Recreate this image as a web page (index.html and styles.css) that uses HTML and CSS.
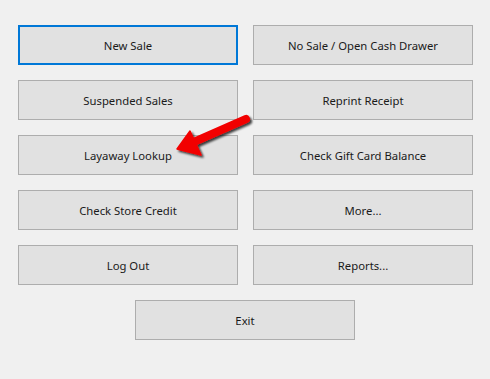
FILE: index.html
```html
<!DOCTYPE html>
<html>
<head>
<meta charset="utf-8">
<link rel="stylesheet" href="styles.css">
</head>
<body>
<div class="panel">
  <div class="grid">
    <button class="btn focused">New Sale</button>
    <button class="btn">No Sale / Open Cash Drawer</button>
    <button class="btn">Suspended Sales</button>
    <button class="btn">Reprint Receipt</button>
    <button class="btn">Layaway Lookup</button>
    <button class="btn">Check Gift Card Balance</button>
    <button class="btn">Check Store Credit</button>
    <button class="btn">More...</button>
    <button class="btn">Log Out</button>
    <button class="btn">Reports...</button>
    <button class="btn exit">Exit</button>
  </div>
  <svg class="arrow" width="490" height="379" viewBox="0 0 490 379">
    <defs>
      <filter id="sh" x="-20%" y="-20%" width="140%" height="140%">
        <feDropShadow dx="2" dy="2" stdDeviation="1.2" flood-color="#000" flood-opacity="0.75"/>
      </filter>
    </defs>
    <g filter="url(#sh)">
      <line x1="246" y1="119" x2="196" y2="141" stroke="#f20000" stroke-width="8" stroke-linecap="round"/>
      <polygon points="177,149 190,131 201,155" fill="#f20000" stroke="#f20000" stroke-width="1.5" stroke-linejoin="round"/>
    </g>
  </svg>
</div>
</body>
</html>
```

FILE: styles.css
```css
html, body {
  margin: 0;
  padding: 0;
  background: #f0f0f0;
}
.panel {
  width: 490px;
  height: 379px;
  padding: 25px 0 0 18px;
  box-sizing: border-box;
}
.grid {
  display: grid;
  grid-template-columns: 220px 220px;
  grid-auto-rows: 40px;
  column-gap: 15px;
  row-gap: 15px;
}
.btn {
  margin: 0;
  padding: 0;
  box-sizing: border-box;
  background: #e1e1e1;
  border: 1px solid #adadad;
  border-radius: 0;
  font-family: "Noto Sans", "Open Sans", sans-serif;
  font-size: 11.3px;
  color: #1a1a1a;
  text-align: center;
}
.focused {
  border: 2px solid #0078d7;
}
.exit {
  grid-column: 1 / -1;
  justify-self: center;
  width: 220px;
  margin-left: -1px;
}
.arrow {
  position: absolute;
  left: 0;
  top: 0;
  pointer-events: none;
}
```
